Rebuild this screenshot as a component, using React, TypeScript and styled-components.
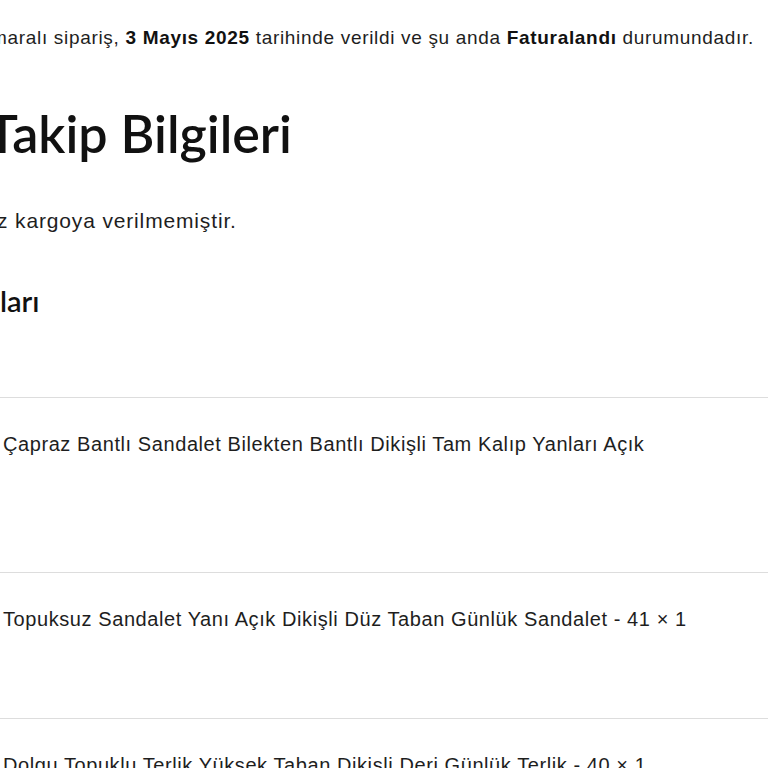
import React from 'react';
import styled, { createGlobalStyle } from 'styled-components';

const GlobalStyle = createGlobalStyle`
  html, body {
    margin: 0;
    padding: 0;
    background: #ffffff;
    overflow: hidden;
  }
  body {
    font-family: "Liberation Sans", Arial, sans-serif;
    color: #1e1e1e;
  }
`;

const Page = styled.main`
  width: 768px;
  height: 768px;
  overflow: hidden;
  display: flex;
  flex-direction: column;
`;

const Text = styled.p<{ $cut?: number }>`
  margin: 0;
  font-size: 19px;
  line-height: 27px;
  letter-spacing: 0.68px;
  white-space: nowrap;
  text-indent: ${(p) => -(p.$cut || 0)}px;
  b {
    font-weight: 700;
    color: #111;
  }
`;

const Notice = styled(Text)`
  padding-top: 24px;
`;

const Heading = styled.h2<{ $cut?: number }>`
  margin: 0;
  padding-top: 52px;
  font-family: Lato, "Noto Sans", sans-serif;
  font-weight: 600;
  font-size: 52px;
  line-height: 60px;
  color: #111;
  white-space: nowrap;
  text-indent: ${(p) => -(p.$cut || 0)}px;
`;

const Status = styled(Text)`
  padding-top: 44px;
  font-size: 21px;
  letter-spacing: 0.85px;
`;

const SubHeading = styled.h3`
  margin: 0;
  padding-top: 50px;
  font-family: Lato, "Noto Sans", sans-serif;
  font-weight: 600;
  font-size: 29px;
  line-height: 34px;
  color: #111;
`;

const Items = styled.ul`
  list-style: none;
  margin: 79px 0 0;
  padding: 0;
`;

const Item = styled.li<{ $height: number }>`
  height: ${(p) => p.$height}px;
  box-sizing: border-box;
  border-top: 1px solid #dddddd;
  padding: 33px 0 0 3px;
`;

const ItemName = styled(Text)`
  font-size: 20px;
  letter-spacing: 0.58px;
`;

const products = [
  { name: 'Çapraz Bantlı Sandalet Bilekten Bantlı Dikişli Tam Kalıp Yanları Açık', height: 175 },
  { name: 'Topuksuz Sandalet Yanı Açık Dikişli Düz Taban Günlük Sandalet - 41 × 1', height: 146 },
  { name: 'Dolgu Topuklu Terlik Yüksek Taban Dikişli Deri Günlük Terlik - 40 × 1', height: 120 },
];

export default function App() {
  return (
    <Page>
      <GlobalStyle />
      <Notice $cut={9}>
        maralı sipariş, <b>3 Mayıs 2025</b> tarihinde verildi ve şu anda <b>Faturalandı</b> durumundadır.
      </Notice>
      <Heading $cut={13}>Takip Bilgileri</Heading>
      <Status $cut={3}>z kargoya verilmemiştir.</Status>
      <SubHeading>ları</SubHeading>
      <Items>
        {products.map((p) => (
          <Item key={p.name} $height={p.height}>
            <ItemName>{p.name}</ItemName>
          </Item>
        ))}
      </Items>
    </Page>
  );
}
